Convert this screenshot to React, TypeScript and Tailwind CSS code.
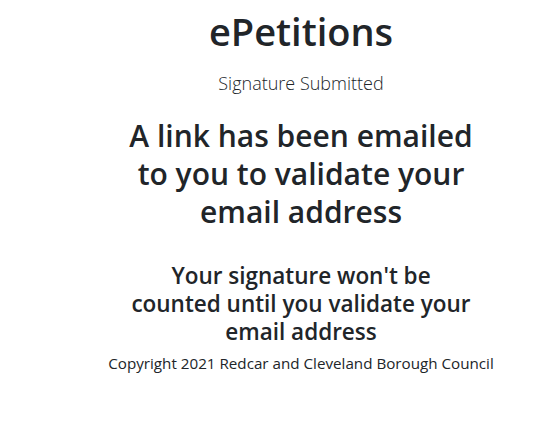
export default function App() {
  return (
    <div
      className="min-h-screen bg-white text-[#212529] pl-[49px]"
      style={{ fontFamily: '"Open Sans", "Noto Sans", sans-serif' }}
    >
      <div className="flex flex-col items-center text-center pt-[9px]">
        <h1 className="text-[38px] leading-[1.2] font-semibold whitespace-nowrap">ePetitions</h1>
        <p className="mt-[18px] text-[18px] leading-[1.2] font-light whitespace-nowrap">Signature Submitted</p>
        <h2 className="mt-[23px] text-[30px] leading-[38px] font-semibold whitespace-nowrap">
          A link has been emailed
          <br />
          to you to validate your
          <br />
          email address
        </h2>
        <h4 className="mt-[31px] text-[22.5px] leading-[28px] font-semibold whitespace-nowrap">
          Your signature won't be
          <br />
          counted until you validate your
          <br />
          email address
        </h4>
        <p className="mt-[6px] text-[15.2px] leading-[1.5] whitespace-nowrap">
          Copyright 2021 Redcar and Cleveland Borough Council
        </p>
      </div>
    </div>
  );
}
